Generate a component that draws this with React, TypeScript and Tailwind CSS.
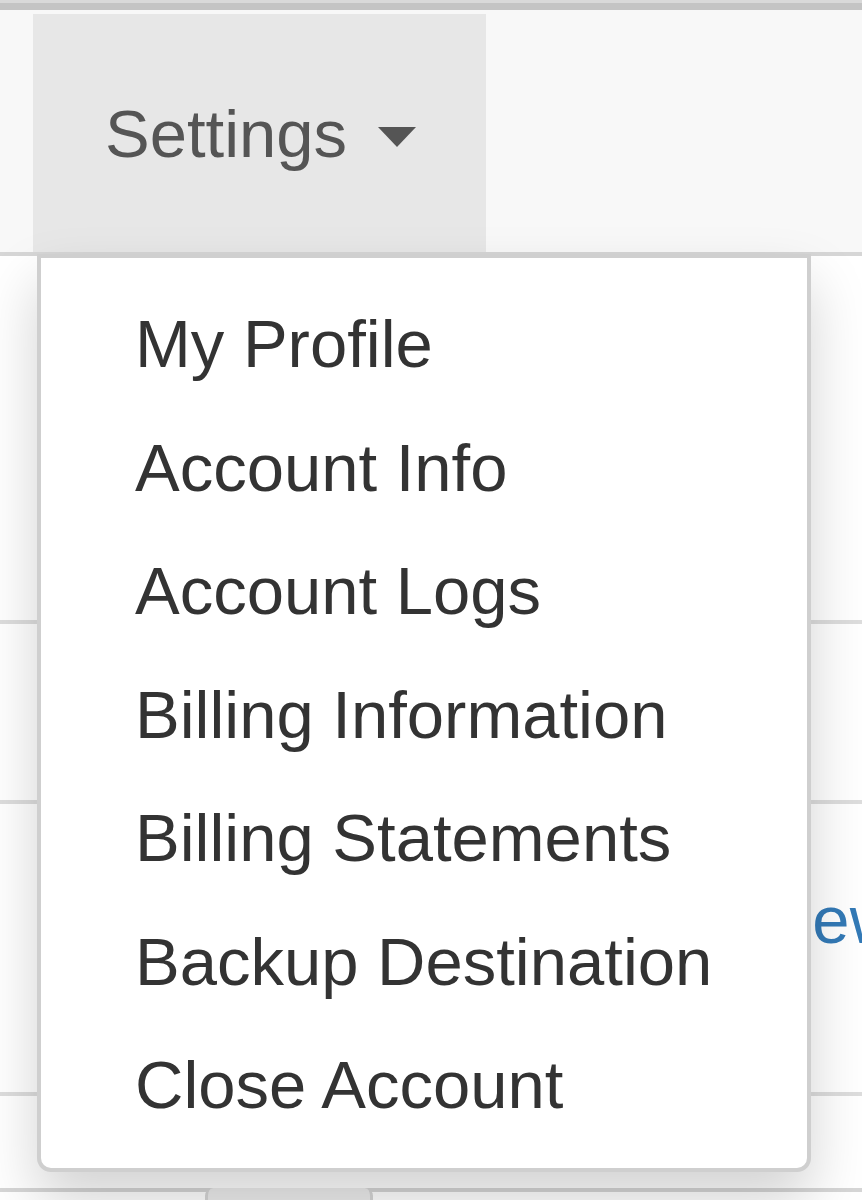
import React from "react";

const items = [
  "My Profile",
  "Account Info",
  "Account Logs",
  "Billing Information",
  "Billing Statements",
  "Backup Destination",
  "Close Account",
];

export default function App() {
  return (
    <div
      className="relative w-[862px] h-[1200px] overflow-hidden bg-white"
      style={{ fontFamily: '"Liberation Sans", Arial, sans-serif' }}
    >
      {/* top strip */}
      <div className="h-[3px] bg-[#d9d9d9]" />
      <div className="h-[7px] bg-[#c4c4c4]" />
      {/* navbar */}
      <div className="h-[246px] bg-[#f8f8f8] border-b-[4px] border-[#d6d6d6] flex items-end pl-[33px]">
        <div className="w-[453px] h-[238px] bg-[#e7e7e7] flex items-center pl-[72px]">
          <span className="text-[67px] leading-none text-[#555555]">Settings</span>
          <span className="ml-[31px] mt-[8px] w-0 h-0 border-t-[20px] border-t-[#555555] border-x-[19px] border-x-transparent" />
        </div>
      </div>
      {/* page content: table rows */}
      <div className="h-[364px]" />
      <div className="h-[180px] border-t-[4px] border-[#dddddd]" />
      <div className="h-[292px] border-t-[4px] border-[#dddddd] flex items-start">
        <span className="ml-[754px] mt-[82px] text-[67px] leading-none text-[#337ab7]">View</span>
      </div>
      <div className="h-[96px] border-t-[4px] border-[#dddddd]" />
      <div className="relative h-[20px] border-t-[4px] border-[#d6d6d6]">
        <div className="absolute left-[205px] top-[-4px] w-[168px] h-[24px] bg-[#ececec] border-x-[3px] border-[#d6d6d6] rounded-t-[8px]" />
      </div>

      {/* dropdown menu */}
      <div className="absolute left-[37px] top-[254px] w-[774px] h-[918px] bg-white border-[4px] border-[#cfcfcf] rounded-b-[14px] shadow-[0_29px_57px_rgba(0,0,0,0.175)] pt-[24px]">
        {items.map((t) => (
          <div
            key={t}
            className="pl-[94px] py-[14px] text-[67px] leading-[95.5px] text-[#333333] whitespace-nowrap"
          >
            {t}
          </div>
        ))}
      </div>
    </div>
  );
}
